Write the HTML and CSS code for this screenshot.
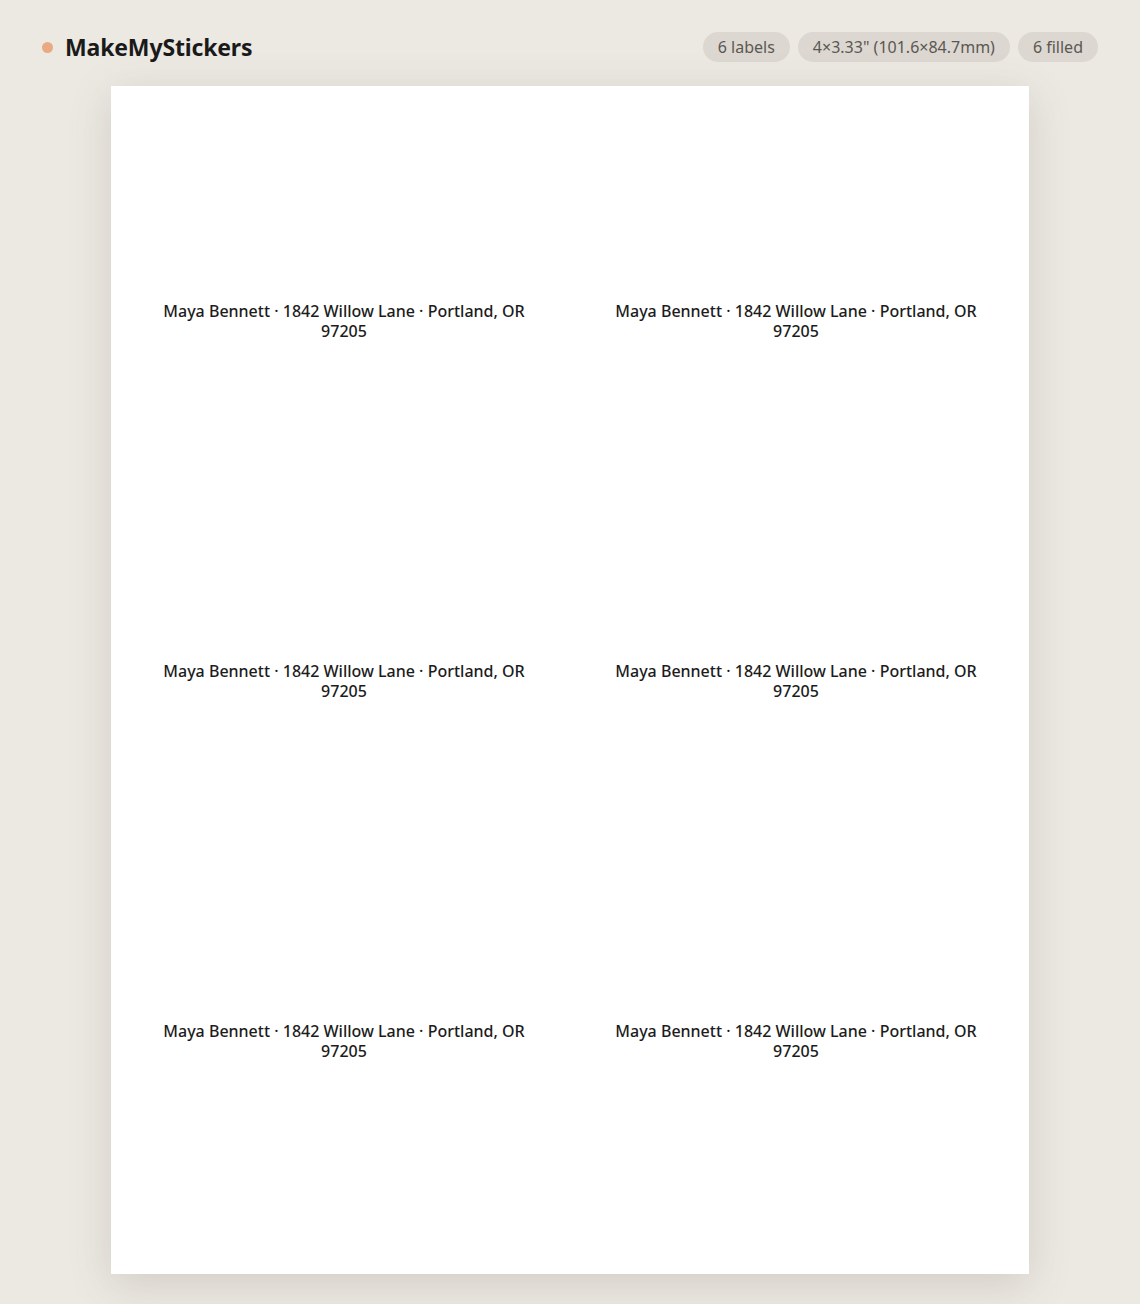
FILE: index.html
```
<!DOCTYPE html>
<html lang="en">
<head>
<meta charset="utf-8">
<title>MakeMyStickers</title>
<link rel="stylesheet" href="styles.css">
</head>
<body>
<header class="topbar">
  <div class="brand">
    <span class="brand-dot"></span>
    <span class="brand-name">MakeMyStickers</span>
  </div>
  <div class="chips">
    <span class="chip">6 labels</span>
    <span class="chip">4×3.33" (101.6×84.7mm)</span>
    <span class="chip">6 filled</span>
  </div>
</header>
<main class="stage">
  <section class="sheet">
    <div class="label"><p class="label-text">Maya Bennett · 1842 Willow Lane · Portland, OR 97205</p></div>
    <div class="label"><p class="label-text">Maya Bennett · 1842 Willow Lane · Portland, OR 97205</p></div>
    <div class="label"><p class="label-text">Maya Bennett · 1842 Willow Lane · Portland, OR 97205</p></div>
    <div class="label"><p class="label-text">Maya Bennett · 1842 Willow Lane · Portland, OR 97205</p></div>
    <div class="label"><p class="label-text">Maya Bennett · 1842 Willow Lane · Portland, OR 97205</p></div>
    <div class="label"><p class="label-text">Maya Bennett · 1842 Willow Lane · Portland, OR 97205</p></div>
  </section>
</main>
</body>
</html>
```
FILE: styles.css
```
* { box-sizing: border-box; }
html, body {
  margin: 0;
  padding: 0;
  background: #ece9e3;
  font-family: "Noto Sans", "Open Sans", sans-serif;
  color: #1c1c1c;
}
.topbar {
  display: flex;
  align-items: center;
  justify-content: space-between;
  padding: 32px 42px 0 42px;
  height: 62px;
}
.brand {
  display: flex;
  align-items: center;
  gap: 12px;
}
.brand-dot {
  width: 11px;
  height: 11px;
  border-radius: 50%;
  background: #e9a983;
}
.brand-name {
  font-size: 23px;
  font-weight: 700;
  color: #1a1a1a;
  letter-spacing: -0.15px;
}
.chips {
  display: flex;
  gap: 8px;
}
.chip {
  display: inline-flex;
  align-items: center;
  height: 30px;
  padding: 0 15px;
  border-radius: 15px;
  background: #dcd8d1;
  color: #5b5752;
  font-size: 16px;
}
.stage {
  display: flex;
  justify-content: center;
  padding: 24px 0 30px;
}
.sheet {
  width: 918px;
  height: 1188px;
  background: #ffffff;
  box-shadow: 0 10px 40px rgba(90, 80, 60, 0.18);
  padding: 54px 17px;
  display: grid;
  grid-template-columns: 432px 432px;
  grid-template-rows: repeat(3, 360px);
  column-gap: 20px;
}
.label {
  display: flex;
  align-items: center;
  justify-content: center;
  padding: 2px 26px 0;
}
.label-text {
  margin: 0;
  text-align: center;
  font-size: 16px;
  font-weight: 500;
  line-height: 20px;
  color: #1c1c1c;
}
```
